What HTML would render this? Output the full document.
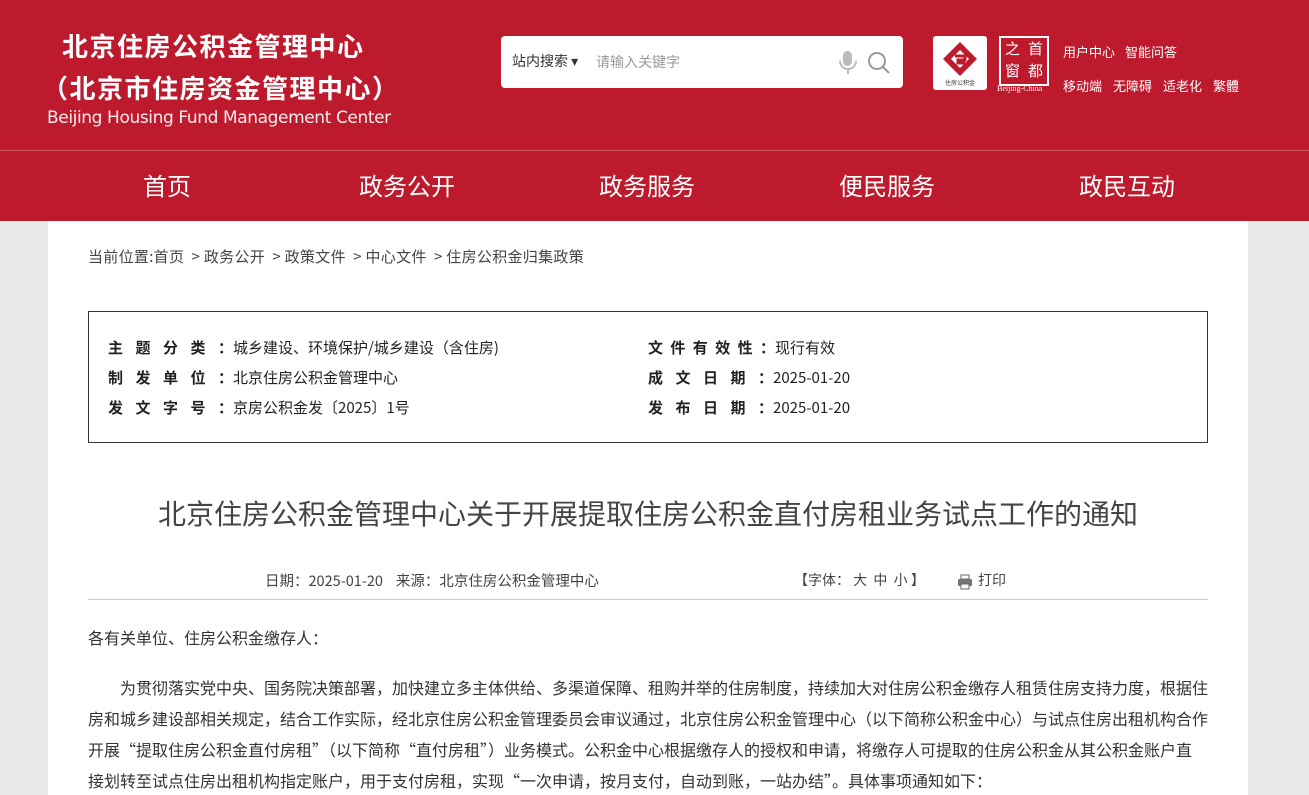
<!DOCTYPE html>
<html><head><meta charset="utf-8"><style>
*{margin:0;padding:0;box-sizing:border-box}
body{width:1309px;height:795px;overflow:hidden;background:#e9e9e9;font-family:"Noto Sans CJK SC","Liberation Sans",sans-serif;color:#333}
.hd{position:absolute;left:0;top:0;width:1309px;height:150px;background:#bd1a2d}
.t1{position:absolute;left:62px;top:26px;color:#fff;font-size:26px;font-weight:bold;letter-spacing:1.5px;line-height:40px}
.t2{position:absolute;left:42px;top:68px;color:#fff;font-size:26px;font-weight:bold;letter-spacing:1.5px;line-height:40px}
.t3{position:absolute;left:47px;top:108px;color:#fff;font-size:17px;opacity:.92;font-family:"DejaVu Sans",sans-serif;letter-spacing:-.4px}
.sb{position:absolute;left:501px;top:36px;width:402px;height:52px;background:#fff;border-radius:4px}
.sb .a{position:absolute;left:11px;top:15px;font-size:14px;color:#333}
.sb .b{position:absolute;left:95px;top:16px;font-size:14px;color:#999}
.nav{position:absolute;left:0;top:150px;width:1309px;height:71px;background:#bd1a2d;border-top:1px solid #d45b68}
.nav span{position:absolute;top:16px;color:#fff;font-size:24px}
.main{position:absolute;left:48px;top:221px;width:1200px;height:574px;background:#fff;overflow:hidden}
.lk{position:absolute;color:#fff;font-size:13px}
.info{position:absolute;left:40px;top:90px;width:1120px;height:132px;border:1px solid #333}
.info div{position:absolute;font-size:15px;color:#222;line-height:22px}
.info b{letter-spacing:12.5px}
.info i{font-style:normal;display:inline-block;width:15px;font-weight:bold}
p.c{position:absolute;left:40px;width:1126px;font-size:16px;line-height:31px;color:#333;white-space:nowrap}
</style></head><body>
<div class="hd">
<div class="t1">北京住房公积金管理中心</div>
<div class="t2">（北京市住房资金管理中心）</div>
<div class="t3">Beijing Housing Fund Management Center</div>
<div class="sb"><span class="a">站内搜索 ▾</span><span class="b">请输入关键字</span>
<svg style="position:absolute;left:336px;top:14px" width="22" height="26"><rect x="6" y="1" width="9" height="15" rx="4.5" fill="#bbb"/><path d="M3 11a8 8 0 0 0 16 0M11 19v5" stroke="#bbb" stroke-width="2" fill="none"/></svg>
<svg style="position:absolute;left:366px;top:15px" width="24" height="24"><circle cx="10" cy="10" r="8" stroke="#999" stroke-width="2" fill="none"/><path d="M16 16l6 6" stroke="#999" stroke-width="2"/></svg></div>
<div style="position:absolute;left:933px;top:36px;width:54px;height:54px;background:#fff;border-radius:3px">
<svg width="54" height="54"><path d="M27 6l17 17-17 17-17-17z" fill="#bd1a2d"/><path d="M27 14l9 9-9 9-9-9z" fill="#fff"/><path d="M22 20h10v4h-7v3h7" stroke="#bd1a2d" stroke-width="3" fill="none"/><text x="27" y="49" font-size="6" text-anchor="middle" fill="#333">住房公积金</text></svg></div>
<div style="position:absolute;left:999px;top:36px;width:50px;height:50px;border:2px solid #fff;color:#fff;font-size:15px;line-height:22px;text-align:center">
<div style="display:flex;flex-wrap:wrap"><span style="width:23px">之</span><span style="width:23px">首</span><span style="width:23px">窗</span><span style="width:23px">都</span></div></div>
<div style="position:absolute;left:997px;top:84px;color:#fff;font-size:8px;font-family:'Liberation Serif',serif;line-height:10px">Beijing-China</div>
<span class="lk" style="left:1063px;top:42px">用户中心</span><span class="lk" style="left:1125px;top:42px">智能问答</span>
<span class="lk" style="left:1063px;top:76px">移动端</span><span class="lk" style="left:1113px;top:76px">无障碍</span><span class="lk" style="left:1163px;top:76px">适老化</span><span class="lk" style="left:1213px;top:76px">繁體</span>
</div>
<div class="nav"><span style="left:143px">首页</span><span style="left:359px">政务公开</span><span style="left:599px">政务服务</span><span style="left:839px">便民服务</span><span style="left:1079px">政民互动</span></div>
<div class="main">
<div style="position:absolute;left:40px;top:25px;font-size:15px;color:#444;letter-spacing:.3px">当前位置:首页 &nbsp;&gt; 政务公开 &nbsp;&gt; 政策文件 &nbsp;&gt; 中心文件 &nbsp;&gt; 住房公积金归集政策</div>
<div class="info">
<div style="left:19px;top:25px"><b>主题分类</b><i>：</i>城乡建设、环境保护/城乡建设（含住房)</div>
<div style="left:19px;top:55px"><b>制发单位</b><i>：</i>北京住房公积金管理中心</div>
<div style="left:19px;top:85px"><b>发文字号</b><i>：</i>京房公积金发〔2025〕1号</div>
<div style="left:559px;top:25px"><b style="letter-spacing:7.4px">文件有效性</b><i>：</i>现行有效</div>
<div style="left:559px;top:55px"><b>成文日期</b><i>：</i>2025-01-20</div>
<div style="left:559px;top:85px"><b>发布日期</b><i>：</i>2025-01-20</div>
</div>
<div style="position:absolute;left:0;width:1200px;top:272px;text-align:center;font-size:28px;color:#444">北京住房公积金管理中心关于开展提取住房公积金直付房租业务试点工作的通知</div>
<div style="position:absolute;left:217px;top:349px;font-size:14.5px;color:#444">日期：2025-01-20 &nbsp;&nbsp; 来源：北京住房公积金管理中心</div>
<div style="position:absolute;left:746px;top:349px;font-size:14px;color:#444">【字体：&nbsp;大 &nbsp;中 &nbsp;小 】</div>
<svg style="position:absolute;left:909px;top:353px" width="16" height="16"><rect x="4" y="1" width="8" height="4" fill="none" stroke="#666"/><rect x="1" y="5" width="14" height="7" rx="1" fill="#777"/><rect x="4" y="10" width="8" height="5" fill="#fff" stroke="#666"/></svg>
<div style="position:absolute;left:930px;top:349px;font-size:14px;color:#444">打印</div>
<div style="position:absolute;left:40px;top:378px;width:1120px;border-top:1px solid #ccc"></div>
<p class="c" style="top:401px">各有关单位、住房公积金缴存人：</p>
<p class="c" style="top:451px;text-indent:2em">为贯彻落实党中央、国务院决策部署，加快建立多主体供给、多渠道保障、租购并举的住房制度，持续加大对住房公积金缴存人租赁住房支持力度，根据住<br>房和城乡建设部相关规定，结合工作实际，经北京住房公积金管理委员会审议通过，北京住房公积金管理中心（以下简称公积金中心）与试点住房出租机构合作<br>开展“提取住房公积金直付房租”（以下简称“直付房租”）业务模式。公积金中心根据缴存人的授权和申请，将缴存人可提取的住房公积金从其公积金账户直<br>接划转至试点住房出租机构指定账户，用于支付房租，实现“一次申请，按月支付，自动到账，一站办结”。具体事项通知如下：</p>
</div>
</body></html>
